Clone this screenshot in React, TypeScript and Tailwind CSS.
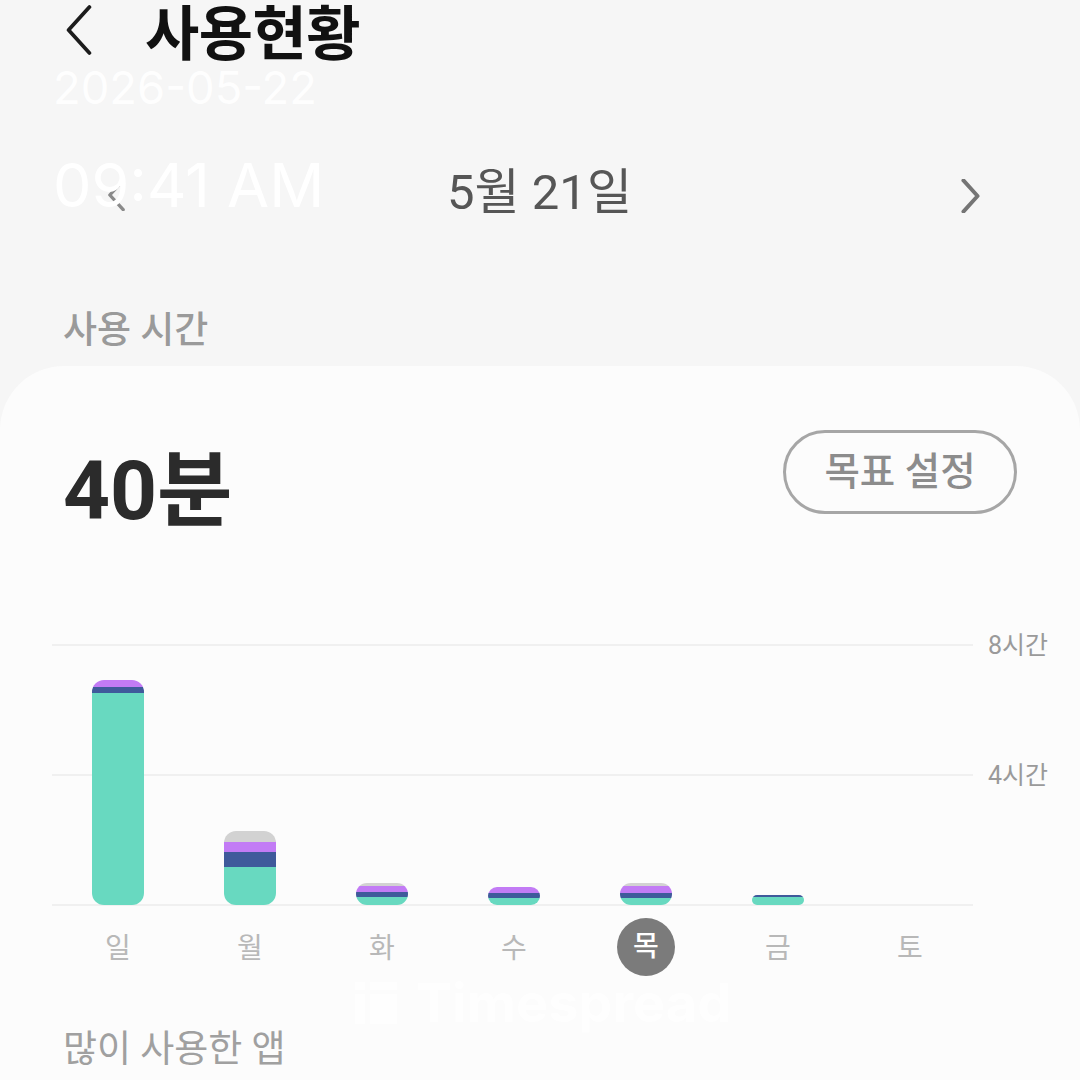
const kr = "font-['Roboto','Noto_Sans_CJK_KR',sans-serif]";

const bars = [
    { gray: 0, purple: 7, navy: 6, green: 212 },
    { gray: 11, purple: 10, navy: 15, green: 38 },
    { gray: 3, purple: 6, navy: 5, green: 8 },
    { gray: 0, purple: 6, navy: 5, green: 7 },
    { gray: 3, purple: 7, navy: 5, green: 7 },
    { gray: 0, purple: 0, navy: 2, green: 8 },
    { gray: 0, purple: 0, navy: 0, green: 0 },
];

const days = ["일", "월", "화", "수", "목", "금", "토"];

function Chevron({ dir, className, weight }: { dir: "left" | "right"; className: string; weight: number }) {
    return (
        <svg viewBox="0 0 24 48" fill="none" className={className}>
            <path
                d={dir === "left" ? "M22 2 L2 24 L22 46" : "M2 2 L22 24 L2 46"}
                stroke="currentColor"
                strokeWidth={weight}
                strokeLinecap="round"
                strokeLinejoin="round"
            />
        </svg>
    );
}

export default function App() {
    return (
        <div className={`w-[1080px] h-[1080px] overflow-hidden relative flex flex-col bg-[#f6f6f6] ${kr}`}>
            <div className="h-[60px] pl-[66px] flex items-center">
                <Chevron dir="left" className="w-[26px] h-[50px] text-[#1c1c1c]" weight={3.6} />
                <h1 className="ml-[53px] mt-[10px] text-[59px] leading-[60px] font-bold text-[#111111] tracking-[-0.5px]">사용현황</h1>
            </div>

            <div className="h-[240px] pl-[108px] pr-[100px] pt-[101px] flex justify-between items-start text-[#565656]">
                <Chevron dir="left" className="w-[17px] h-[32px] mt-[18px] text-[#8a8a8a]" weight={5} />
                <div className="mr-[7px] text-[49px] leading-[64px]">5월 21일</div>
                <Chevron dir="right" className="w-[19px] h-[34px] mt-[18px] text-[#757575]" weight={5.5} />
            </div>

            <div className="h-[66px] pl-[63px] pt-[9px] text-[37px] leading-[44px] font-medium text-[#9a9a9a]">사용 시간</div>

            <div className="flex-1 bg-[#fcfcfc] rounded-t-[64px] flex flex-col">
                <div className="h-[278px] pl-[63px] pr-[63px] pt-[64px] flex justify-between items-start">
                    <div className="mt-[5px] text-[82px] leading-[112px] font-bold text-[#2b2b2b]">40분</div>
                    <button className="w-[234px] h-[84px] rounded-full border-[3px] border-[#a6a6a6] text-[38.5px] font-medium text-[#8c8c8c]">
                        목표 설정
                    </button>
                </div>

                <div className="relative ml-[52px] w-[1000px] h-[262px]">
                    <div className="w-[921px] h-[130px] border-t-2 border-[#f0f0f0]" />
                    <div className="w-[921px] h-[132px] border-t-2 border-b-2 border-[#f0f0f0]" />
                    <div className="absolute right-0 top-[-14px] w-[64px] text-[25px] leading-[32px] text-[#9a9a9a] whitespace-nowrap">8시간</div>
                    <div className="absolute right-0 top-[116px] w-[64px] text-[25px] leading-[32px] text-[#9a9a9a] whitespace-nowrap">4시간</div>
                    <div className="absolute left-0 bottom-[1px] w-[924px] h-full grid grid-cols-7 items-end">
                        {bars.map((b, i) => (
                            <div key={i} className="w-[52px] mx-auto rounded-[12px] overflow-hidden flex flex-col">
                                <div className="bg-[#d2d2d2]" style={{ height: b.gray }} />
                                <div className="bg-[#c27bf5]" style={{ height: b.purple }} />
                                <div className="bg-[#3f5a9b]" style={{ height: b.navy }} />
                                <div className="bg-[#68d9c0]" style={{ height: b.green }} />
                            </div>
                        ))}
                    </div>
                </div>

                <div className="ml-[52px] w-[924px] grid grid-cols-7 mt-[12px]">
                    {days.map((d) => (
                        <div key={d} className="h-[58px] flex items-center justify-center">
                            <div className={d === "목"
                                ? "w-[58px] h-[58px] rounded-full bg-[#7b7b7b] text-white font-medium text-[28px] flex items-center justify-center"
                                : "pt-[4px] text-[28px] text-[#b8b8b8]"}>
                                {d}
                            </div>
                        </div>
                    ))}
                </div>

                <div className="ml-[63px] mt-[49px] text-[37px] leading-[50px] text-[#a0a0a0]">많이 사용한 앱</div>
            </div>

            <div className="absolute left-[53px] top-[60px] text-white font-['Inter',sans-serif]">
                <div className="text-[45.4px] leading-[56px] opacity-90">2026-05-22</div>
                <div className="mt-[33px] text-[61px] leading-[72px]">09:41 AM</div>
            </div>

            <div className="absolute left-[355px] top-[980px] flex items-center gap-[19px] text-white font-['Inter',sans-serif] opacity-80">
                <svg viewBox="0 0 42 42" className="w-[42px] h-[42px]" fill="currentColor">
                    <rect x="0" y="0" width="10" height="8" />
                    <rect x="0" y="12" width="10" height="30" />
                    <rect x="15" y="0" width="27" height="8" />
                    <rect x="15" y="12" width="27" height="30" />
                </svg>
                <span className="text-[54px] leading-[46px] font-bold">Timespread</span>
            </div>
        </div>
    );
}
